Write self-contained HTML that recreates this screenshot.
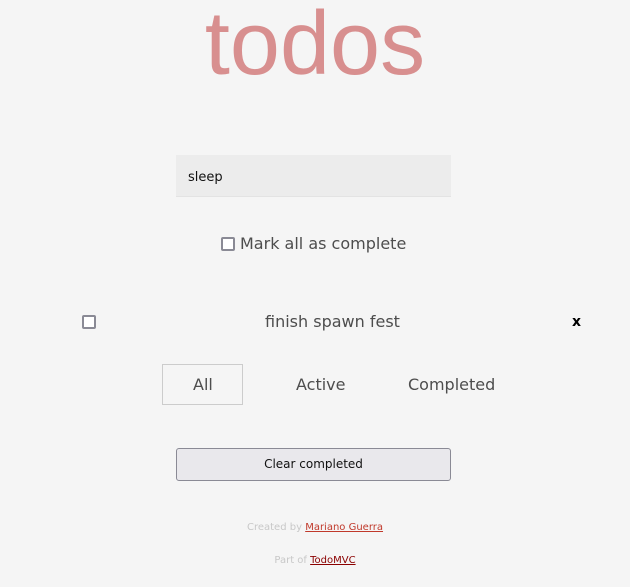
<!DOCTYPE html>
<html><head><style>
body{margin:0;background:#f5f5f5;width:630px;height:587px;position:relative;font-family:"DejaVu Sans","Liberation Sans",sans-serif;color:#4d4d4d;overflow:hidden}
.a{position:absolute}
h1{position:absolute;margin:0;left:0;width:630px;text-align:center;top:-6px;font:90px/100px "Liberation Sans",sans-serif;color:#d88f8f;font-weight:normal}
.cb{position:absolute;width:10px;height:10px;border:2px solid #8a8a95;border-radius:2px;background:#fff}
</style></head><body>
<h1>todos</h1>
<div class="a" style="left:176px;top:155px;width:275px;height:41px;background:#ececec;border-bottom:1px solid #e3e3e3"></div>
<div class="a" style="left:188px;top:170px;font-size:13px;color:#111">sleep</div>
<div class="cb" style="left:221px;top:237px"></div>
<div class="a" style="left:240px;top:234px;font-size:16px">Mark all as complete</div>
<div class="cb" style="left:82px;top:315px"></div>
<div class="a" style="left:265px;top:312px;font-size:16px">finish spawn fest</div>
<div class="a" style="left:572px;top:314px;font-size:14px;font-weight:bold;color:#000">x</div>
<div class="a" style="left:162px;top:364px;width:79px;height:39px;border:1px solid #ccc"></div>
<div class="a" style="left:193px;top:375px;font-size:16px">All</div>
<div class="a" style="left:296px;top:375px;font-size:16px">Active</div>
<div class="a" style="left:408px;top:375px;font-size:16px">Completed</div>
<div class="a" style="left:176px;top:448px;width:273px;height:31px;border:1px solid #8a8a95;border-radius:3px;background:#e9e8ec;text-align:center;line-height:31px;font-size:12px;color:#111">Clear completed</div>
<div class="a" style="left:0;width:630px;text-align:center;top:522px;font-size:10px;color:#c8c8c8">Created by <span style="color:#c0392b;text-decoration:underline">Mariano Guerra</span></div>
<div class="a" style="left:0;width:630px;text-align:center;top:555px;font-size:10px;color:#c8c8c8">Part of <span style="color:#8b0000;text-decoration:underline">TodoMVC</span></div>
</body></html>
